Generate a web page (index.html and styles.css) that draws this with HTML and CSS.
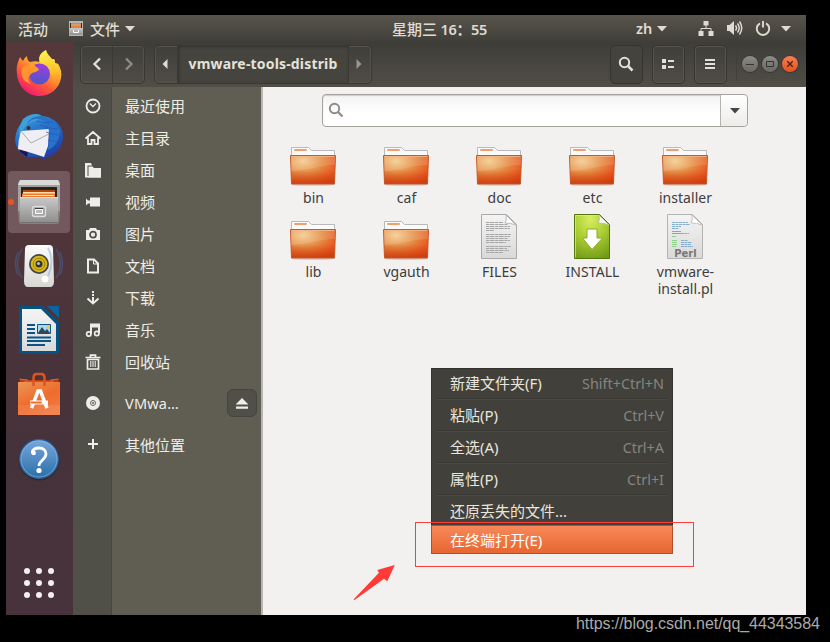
FILE: index.html
```html
<!DOCTYPE html>
<html lang="zh-CN">
<head>
<meta charset="utf-8">
<title>vmware-tools-distrib</title>
<link rel="stylesheet" href="styles.css">
</head>
<body>
<svg class="defs" width="0" height="0" aria-hidden="true">
  <defs>
    <radialGradient id="gFold" cx=".28" cy=".2" r=".95"><stop offset="0" stop-color="#f3cc8e"/><stop offset=".45" stop-color="#e58d45"/><stop offset=".85" stop-color="#e9521d"/><stop offset="1" stop-color="#d94415"/></radialGradient>
    <linearGradient id="gFoldLow" x1="0" y1="0" x2="0" y2="1"><stop offset=".5" stop-color="#cf4a12" stop-opacity="0"/><stop offset="1" stop-color="#c63a0c" stop-opacity=".75"/></linearGradient>
    <linearGradient id="gPage" x1="0" y1="0" x2="0" y2="1"><stop offset="0" stop-color="#f4f4f4"/><stop offset="1" stop-color="#d9d9d9"/></linearGradient>
    <radialGradient id="gGreen" cx=".45" cy=".1" r="1"><stop offset="0" stop-color="#d8ee60"/><stop offset=".5" stop-color="#a8cb30"/><stop offset="1" stop-color="#6d9616"/></radialGradient>
    <linearGradient id="gFox" x1=".85" y1=".05" x2=".25" y2="1"><stop offset="0" stop-color="#fff34e"/><stop offset=".35" stop-color="#ffb32c"/><stop offset=".65" stop-color="#ff5a3a"/><stop offset="1" stop-color="#ef1277"/></linearGradient>
    <linearGradient id="gFlame" x1=".4" y1="0" x2=".5" y2="1"><stop offset="0" stop-color="#fff44f"/><stop offset=".6" stop-color="#ffc02c"/><stop offset="1" stop-color="#ff7a28"/></linearGradient>
    <linearGradient id="gGlobe" x1=".6" y1="0" x2=".4" y2="1"><stop offset="0" stop-color="#a13ae0"/><stop offset="1" stop-color="#4b59c8"/></linearGradient>
    <linearGradient id="gBird" x1=".2" y1="0" x2=".7" y2="1"><stop offset="0" stop-color="#3fa3df"/><stop offset=".45" stop-color="#2268c8"/><stop offset="1" stop-color="#233a9c"/></linearGradient>
    <linearGradient id="gSteel" x1="0" y1="0" x2="0" y2="1"><stop offset="0" stop-color="#c9c9c9"/><stop offset="1" stop-color="#8f8f8f"/></linearGradient>
    <linearGradient id="gSpk" x1="0" y1="0" x2="0" y2="1"><stop offset="0" stop-color="#fbfbfb"/><stop offset="1" stop-color="#d8d7d4"/></linearGradient>
    <linearGradient id="gBag" x1="0" y1="0" x2=".6" y2="1"><stop offset="0" stop-color="#eb9555"/><stop offset=".6" stop-color="#ee6c2c"/><stop offset="1" stop-color="#f07a43"/></linearGradient>
    <linearGradient id="gHelp" x1="0" y1="0" x2="0" y2="1"><stop offset="0" stop-color="#78a6dc"/><stop offset="1" stop-color="#2a6fa8"/></linearGradient>
    <symbol id="folder" viewBox="0 -4 48 48">
      <ellipse cx="24" cy="41.500" rx="22" ry="1.600" fill="#000" opacity=".13"/>
      <path d="M2.500 14V4.500h17l3 3h23V16h-43z" fill="#fafafa" stroke="#b9b9b9"/>
      <rect x="5" y="6" width="13" height="2" rx="1" fill="#f0a070"/>
      <path d="M1.500 12.500h45l-1 28.500H2.500z" fill="url(#gFold)"/>
      <path d="M1.500 12.500h45l-1 28.500H2.500z" fill="url(#gFoldLow)" stroke="#c4592a"/>
      <path d="M2 13h44v9C30 22 18 28 2 28z" fill="#fff" opacity=".12"/>
      <path d="M2.500 13.500h43" stroke="#f5b887" opacity=".8"/>
    </symbol>
    <symbol id="caret" viewBox="0 0 10 6"><path d="M0 0h10L5 5.500z" fill="currentColor"/></symbol>
  </defs>
</svg>

<main class="desktop">
  <header class="topbar">
    <div class="top-left">
      <span class="activities">活动</span>
      <svg class="mini" width="14" height="15" viewBox="0 0 14 15"><path d="M0 0h14v15H0z" fill="#b7b6b3"/><path d="M1 2h12v5H1z" fill="#3c2416"/><path d="M2 2h10v1.500H2zM2 4.500h10V7H2z" fill="#f07c35"/><path d="M2 3.500h10v1H2z" fill="#fff0d0"/><path d="M.5 7h13v7H.5z" fill="url(#gSteel)"/><path d="M4.500 9v2.500h5V9" fill="none" stroke="#fafafa"/></svg>
      <span>文件</span>
      <svg class="caret" width="10" height="6"><use href="#caret"/></svg>
    </div>
    <div class="clock">星期三 <span>16：55</span></div>
    <div class="tray">
      <b class="lang">zh</b>
      <svg class="c1" width="10" height="6"><use href="#caret"/></svg>
      <svg class="net" width="16" height="16" viewBox="0 0 16 16"><path d="M5.500 0h5v4.500h-5zM.5 10h5v5h-5zM10.500 10h5v5h-5z" fill="currentColor"/><path d="M8 4v3.500M3 10V7.500h10V10" fill="none" stroke="currentColor"/></svg>
      <svg class="vol" width="17" height="16" viewBox="0 0 17 16"><path d="M1 4h2.500L8 0v14l-4.500-4H1z" fill="currentColor"/><path d="M9.500 4.500q2 2.500 0 5M11.500 2.500q3.500 4.500 0 9M13.500 .5q4.500 6.500 0 13" fill="none" stroke="currentColor" stroke-width="1.500"/></svg>
      <svg class="pow" width="16" height="16" viewBox="0 0 16 16"><path d="M5 2.300A6.200 6.200 0 1 0 11 2.300M8 0v6.500" fill="none" stroke="currentColor" stroke-width="1.900"/></svg>
      <svg class="c2" width="10" height="6"><use href="#caret"/></svg>
    </div>
  </header>

  <div class="below">
    <nav class="dock">
      <div class="tile"><svg viewBox="8 43 62 62"><path d="M17 74C16 66 18 62 20 57q1 2 3 4 1-3 4-5 0 4 3 6c4-1 7-1 9 0 1-5 3-9 7-12 1 4 4 6 6 9l2 0q1 2 1 4l3 1c3 5 4 9 3 14-2 11-11 18-22 18S18 87 17 74z" fill="url(#gFox)"/><path d="M39 58c1-4 3-6 7-8 0 5 4 6 6 10l2-1q1 2 1 4l3 1c4 6 3 17-4 23 0-11-4-15-9-19-4-3-6-6-6-10z" fill="url(#gFlame)"/><circle cx="39.500" cy="74" r="10.500" fill="url(#gGlobe)"/><path d="M22 68q5-4 10-1l7 2c-1 3-4 3-7 4-4 3-5 7-1 11-8-2-11-9-9-16z" fill="#ff942e"/><path d="M27 66q5-2 6-4 2 5 6 7l-5 2z" fill="#ff9a2c"/></svg></div>
      <div class="tile"><svg viewBox="8 107 62 62"><path d="M36 114q4 0 6 2c12 1 22 10 21 22q-1 10-8 16l-1-2-3 6-2-2-8 5 2-4H26C18 153 14 144 15.500 136 17 127 23 119 31 116z" fill="url(#gBird)"/><path d="M19 147l9 4-1 6-7-5z" fill="#221450"/><path d="M23 119q6-5 13-5l6 2-6 5q-9 1-13 9l-4 6q0-10 4-17z" fill="#3f9fd8"/><circle cx="28.500" cy="128" r="2" fill="#3b3526"/><path d="M21 131l28-2-1 17-4 11q-12-4-26-8 0-9 3-18z" fill="#efeef2"/><path d="M21 131l10 12 18-9" fill="none" stroke="#a3a3ad" stroke-width=".9"/><path d="M27 124q5-6 13-5c9 2 8 11 10 15l-2 16q12-6 12-20-6-11-18-14-12 0-15 8z" fill="#2674ca"/><path d="M36 121q9 3 17 1M40 125q9 4 18 4M46 132q7 3 13 3M48 140q5 2 9 1" stroke="#2856b5" fill="none" opacity=".7"/></svg></div>
      <div class="tile active"><i class="run-dot"></i><svg viewBox="8 171 62 62"><path d="M18 184q1-4 3-4h36q3 0 3 4v27H18z" fill="#a3a2a0"/><path d="M20 180h38l2 5H18z" fill="#dadad9"/><path d="M21 187h36v11H21z" fill="#262421"/><path d="M23 190h32v8H23z" fill="#b5460f"/><path d="M23 192h32v2H23z" fill="#ffd9a8"/><path d="M22 193.500h33v4H22z" fill="#ee792b"/><path d="M23 195.500h31" stroke="#ffe9c4"/><path d="M18 211h42l-1 11q0 2-2 2H21q-2 0-2-2z" fill="#858381"/><path d="M20 197h38v25H20z" fill="url(#gSteel)"/><path d="M20 197.500h38" stroke="#ddd"/><path d="M20 222.500h38" stroke="#717171"/><rect x="32.500" y="206.500" width="13" height="10" rx="2" fill="#a4a4a4" stroke="#dedede" stroke-width="1.300"/><path d="M35.500 209.500h7v4h-7z" fill="#bbb" stroke="#fff"/><path d="M35 208.500h8" stroke="#3b3b3b"/></svg></div>
      <div class="tile"><svg viewBox="8 235 62 62"><path d="M22 249q-9 15 0 29M18 252q-5 12 0 23M56 249q9 15 0 29M60 252q5 12 0 23" fill="none" stroke="#4c4d68" stroke-width="1.500"/><path d="M29 245h20q4 0 4 4l1 32q0 6-4 6H28q-4 0-4-6l1-32q0-4 4-4z" fill="url(#gSpk)"/><path d="M30 246h18" stroke="#fff"/><circle cx="39" cy="264" r="10" fill="#444"/><circle cx="39" cy="264" r="8.300" fill="#d8b717"/><circle cx="39" cy="264" r="5.800" fill="none" stroke="#8e760c" stroke-width=".8"/><circle cx="39" cy="264" r="3.500" fill="#34342f"/><circle cx="38.500" cy="263.500" r="1.600" fill="#bbb"/><circle cx="45" cy="279" r="4" fill="#fff" stroke="#ddd"/><rect x="29.500" y="277.500" width="4" height="4" fill="none" stroke="#ddd"/><path d="M48 248q7 13 0 28" fill="none" stroke="#8eaeda" stroke-width="2" opacity=".5"/></svg></div>
      <div class="tile"><svg viewBox="8 299 62 62"><path d="M21 306h22l16 16v30q0 2-2 2H21q-2 0-2-2v-44q0-2 2-2z" fill="#08527f"/><path d="M47 306h12v12z" fill="#0d62a0"/><path d="M22 309h19l15 15v27H22z" fill="url(#gPage)"/><path d="M27 325h8M27 329h8M27 333h8M27 337.500h24M27 341h24M27 345h18" stroke="#0a5585" stroke-width="1.800"/><path d="M37.500 324.500h13v9h-13z" fill="#a8d8f4" stroke="#0a5585"/><path d="M38 333l4-6 3 4 2-2 3 4z" fill="#334852"/><circle cx="48" cy="327" r="1.500" fill="#f0c440"/></svg></div>
      <div class="tile"><svg viewBox="8 363 62 62"><path d="M20 379l3 1h32l4-1-1 4H20z" fill="#bd3d11"/><path d="M19.500 379l8 1-3 2h29l-3-2 8-1" fill="none" stroke="#e4682d"/><path d="M18 382h42v33H18z" fill="url(#gBag)"/><path d="M18 405h42v10H18z" fill="#fff" opacity=".08"/><path d="M33.500 386v-8q0-4 3-4h5q3 0 3 4v8" fill="none" stroke="#dd5422" stroke-width="2.500"/><path d="M31.500 408l6.500-17h2.500l6.500 17" fill="none" stroke="#fff" stroke-width="3.500"/><path d="M30 402.500h18" stroke="#fff" stroke-width="4" /><path d="M31 402.500h10" stroke="#ee7033" stroke-width="1.800" stroke-linecap="round"/></svg></div>
      <div class="tile"><svg viewBox="8 427 62 62"><circle cx="39" cy="460" r="20.500" fill="#000" opacity=".2"/><circle cx="39" cy="459" r="19.300" fill="url(#gHelp)" stroke="#2763a0" stroke-width="1.200"/><circle cx="39" cy="459" r="18" fill="none" stroke="#92bae8" opacity=".6"/><path d="M32.500 453.500c-1-4 3-5.500 6.500-5.500 5 0 7 3 7 6 0 6-7 6-7 12" fill="none" stroke="#fff" stroke-width="2.800"/><circle cx="33.700" cy="453" r="2.200" fill="#fff"/><circle cx="39" cy="470.500" r="2.600" fill="#fff"/></svg></div>
      <div class="apps"><i></i><i></i><i></i><i></i><i></i><i></i><i></i><i></i><i></i></div>
    </nav>

    <section class="window">
      <header class="headerbar">
        <div class="group nav">
          <button><svg width="10" height="14" viewBox="0 0 10 14"><path d="M8 1.500L2.500 7 8 12.500" fill="none" stroke="#e3e0da" stroke-width="2.300"/></svg></button>
          <button><svg width="10" height="14" viewBox="0 0 10 14"><path d="M2 1.500L7.500 7 2 12.500" fill="none" stroke="#8e8b84" stroke-width="2.300"/></svg></button>
        </div>
        <div class="group path">
          <button class="edge"><svg width="6" height="10" viewBox="0 0 6 10"><path d="M5.500 0v10L.5 5z" fill="#dedbd4"/></svg></button>
          <button class="current">vmware-tools-distrib</button>
          <button class="edge"><svg width="6" height="10" viewBox="0 0 6 10"><path d="M.5 0v10l5-5z" fill="#99968e"/></svg></button>
        </div>
        <div class="tools">
          <button class="on"><svg width="16" height="16" viewBox="0 0 16 16"><circle cx="6.500" cy="6.500" r="4.700" fill="none" stroke="#e3e0da" stroke-width="2"/><path d="M10 10l4.500 4.500" stroke="#e3e0da" stroke-width="2.500"/></svg></button>
          <button><svg width="14" height="12" viewBox="0 0 14 12"><path d="M1 1h4v4H1zM1 7h4v4H1zM7 2h6v2H7zM7 8h6v2H7z" fill="#e3e0da"/></svg></button>
          <button><svg width="12" height="12" viewBox="0 0 12 12"><path d="M1 1h10v2H1zM1 5h10v2H1zM1 9h10v2H1z" fill="#e3e0da"/></svg></button>
        </div>
        <div class="controls">
          <i><svg width="10" height="10" viewBox="0 0 10 10"><path d="M1 5.500h8" stroke="#35342f"/></svg></i>
          <i><svg width="10" height="10" viewBox="0 0 10 10"><path d="M1.500 2.500h7v5h-7z" fill="none" stroke="#35342f"/></svg></i>
          <i class="close"><svg width="10" height="10" viewBox="0 0 10 10"><path d="M2.300 2.300l5.400 5.400M7.700 2.300L2.300 7.700" stroke="#4b1f10" stroke-width="1.300"/></svg></i>
        </div>
      </header>

      <div class="body">
        <ul class="sidebar">
          <li><span class="ic"><svg viewBox="0 0 16 16"><circle cx="8" cy="8" r="6.500" fill="none" stroke="currentColor" stroke-width="1.800"/><path d="M4.800 5.500L8 8.500 11 5.500" fill="none" stroke="currentColor" stroke-width="1.300"/></svg></span><span class="tx">最近使用</span></li>
          <li><span class="ic"><svg viewBox="0 0 16 16"><path d="M.5 8.500L8 2l7.500 6.500M3 7.500V14h3.500v-4h3v4H13V7.500" fill="none" stroke="currentColor" stroke-width="1.800"/></svg></span><span class="tx">主目录</span></li>
          <li><span class="ic"><svg viewBox="0 0 16 16"><path d="M0 1h6l1 2.500H2.500V14H16v1.500H0z" fill="currentColor"/><path d="M3.500 4.500h4L9 6h7v9.500H3.500z" fill="currentColor"/></svg></span><span class="tx">桌面</span></li>
          <li><span class="ic"><svg viewBox="0 0 16 16"><path d="M5 3.500h10v9H5zM1 4.500L4.500 8 1 11.500z" fill="currentColor"/><path d="M3 8h3" stroke="currentColor" stroke-width="3"/></svg></span><span class="tx">视频</span></li>
          <li><span class="ic"><svg viewBox="0 0 16 16"><path d="M1 4h3l1-2h6l1 2h3v10H1z" fill="currentColor"/><circle cx="8" cy="8.700" r="3" fill="none" stroke="#505048" stroke-width="1.700"/></svg></span><span class="tx">图片</span></li>
          <li><span class="ic"><svg viewBox="0 0 16 16"><path d="M3 1.500h6l4 4V14.500H3z" fill="none" stroke="currentColor" stroke-width="2"/><path d="M8.500 1v5H13" fill="none" stroke="currentColor"/></svg></span><span class="tx">文档</span></li>
          <li><span class="ic"><svg viewBox="0 0 16 16"><path d="M7 1h2v2H7zM7 4h2v2H7zM7 7h2v6H7z" fill="currentColor"/><path d="M2.500 8.500L8 13.500l5.500-5" fill="none" stroke="currentColor" stroke-width="2"/></svg></span><span class="tx">下载</span></li>
          <li><span class="ic"><svg viewBox="0 0 16 16"><path d="M6 12V2.500h8V11M6 4.500h8" fill="none" stroke="currentColor" stroke-width="2"/><circle cx="3.800" cy="12" r="2.200" fill="none" stroke="currentColor" stroke-width="1.700"/><circle cx="11.800" cy="11.500" r="2.200" fill="none" stroke="currentColor" stroke-width="1.700"/></svg></span><span class="tx">音乐</span></li>
          <li><span class="ic"><svg viewBox="0 0 16 16"><path d="M.5 3.500h15M5.500 3V1.200h5V3M2.500 5.500V15h11V5.500z" fill="none" stroke="currentColor" stroke-width="1.700"/><path d="M5.800 7v6M8 7v6M10.200 7v6" stroke="currentColor" stroke-width="1.100"/></svg></span><span class="tx">回收站</span></li>
          <li class="disk"><span class="ic"><svg viewBox="0 0 16 16"><circle cx="8" cy="8" r="7" fill="currentColor"/><circle cx="8" cy="8" r="2.500" fill="none" stroke="#66655c"/><circle cx="8" cy="8" r="1" fill="#66655c"/></svg></span><span class="tx">VMwa…</span><button class="eject"><svg width="12" height="11" viewBox="0 0 12 11"><path d="M0 6L6 0l6 6v.5H0zM0 8.500h12v2.300H0z" fill="#f0eee9"/></svg></button></li>
          <li class="other"><span class="ic"><svg viewBox="0 0 16 16"><path d="M3 8h10M8 3v10" stroke="currentColor" stroke-width="2"/></svg></span><span class="tx">其他位置</span></li>
        </ul>

        <div class="content">
          <div class="search"><svg class="lens" width="16" height="16" viewBox="0 0 16 16"><circle cx="6.500" cy="6.500" r="4.700" fill="none" stroke="#8f8b84" stroke-width="1.900"/><path d="M10 10l4.500 4.500" stroke="#8f8b84" stroke-width="2.300"/></svg><span class="drop"><svg width="10" height="6"><use href="#caret"/></svg></span></div>
          <div class="files">
            <figure><svg><use href="#folder"/></svg><figcaption>bin</figcaption></figure>
            <figure><svg><use href="#folder"/></svg><figcaption>caf</figcaption></figure>
            <figure><svg><use href="#folder"/></svg><figcaption>doc</figcaption></figure>
            <figure><svg><use href="#folder"/></svg><figcaption>etc</figcaption></figure>
            <figure><svg><use href="#folder"/></svg><figcaption>installer</figcaption></figure>
            <figure><svg><use href="#folder"/></svg><figcaption>lib</figcaption></figure>
            <figure><svg><use href="#folder"/></svg><figcaption>vgauth</figcaption></figure>
            <figure><svg viewBox="0 0 48 48"><path d="M6.500 1.500h25l10 10v34h-35z" fill="url(#gPage)" stroke="#a9a9a9"/><path d="M31 2q1 6-1 8 6 0 11 2z" fill="#fff" stroke="#b9b9b9"/><path d="M11 9.500h17M11 11.500h22M11 13.500h24M11 15.500h24M11 17.500h8M11 21.500h25M11 23.500h24M11 25.500h22M11 27.500h24M11 29.500h20M11 33.500h25M11 35.500h21M11 37.500h23M11 39.500h17" stroke="#a6a6a6" stroke-dasharray="3 .5 5 .7"/></svg><figcaption>FILES</figcaption></figure>
            <figure><svg viewBox="0 0 48 48"><path d="M6.500 1.500h25l10 10v34h-35z" fill="url(#gGreen)" stroke="#53760d"/><path d="M7.500 2.500h23M7.500 2.500v42" stroke="#dcf08a" opacity=".7" fill="none"/><path d="M31 2q1 6-1 8 6 0 11 2z" fill="#f8f8f8" stroke="#b4c48c"/><path d="M19 16h10v9h5.500L24 36.500 14.500 25H19z" fill="#fff" stroke="#8aae27"/></svg><figcaption>INSTALL</figcaption></figure>
            <figure><svg viewBox="0 0 48 48"><path d="M6.500 1.500h25l10 10v34h-35z" fill="url(#gPage)" stroke="#b4b4b4"/><path d="M31 2q1 6-1 8 6 0 11 2z" fill="#fff" stroke="#c4c4c4"/><path d="M11 9.500h16M11 11.500h18M11 13.500h9M11 15.500h7M20 20.500h8M20 27.500h7M20 29.500h11M20 31.500h10M20 33.500h12" stroke="#87aecb" stroke-dasharray="3 .5"/><path d="M11 18.500h9M11 20.500h9" stroke="#c882c4"/><path d="M11 23.500h4M11 27.500h5M11 29.500h5M11 31.500h5M11 33.500h4" stroke="#8fd08a"/><text x="24.500" y="43.500" text-anchor="middle" class="perl">Perl</text></svg><figcaption>vmware-<br>install.pl</figcaption></figure>
          </div>
        </div>
      </div>
    </section>
  </div>
</main>

<div class="menu">
  <div class="item"><span>新建文件夹(F)</span><kbd>Shift+Ctrl+N</kbd></div><hr>
  <div class="item"><span>粘贴(P)</span><kbd>Ctrl+V</kbd></div><hr>
  <div class="item"><span>全选(A)</span><kbd>Ctrl+A</kbd></div><hr>
  <div class="item"><span>属性(P)</span><kbd>Ctrl+I</kbd></div><hr>
  <div class="item last"><span>还原丢失的文件...</span></div>
  <div class="item hot"><span>在终端打开(E)</span></div>
</div>
<div class="mark"></div>
<svg class="arrow" width="44" height="38" viewBox="352 564 44 38"><path d="M353.500 599.500L379 572.700 377.300 570 394.800 565 387.300 581.300 384 578.700 354.500 600z" fill="#ff3a37"/></svg>
<div class="watermark">https://blog.csdn.net/qq_44343584</div>
</body>
</html>
```
FILE: styles.css
```css
* { box-sizing: border-box; }
body {
  margin: 0;
  width: 830px;
  height: 642px;
  overflow: hidden;
  background: #000;
  font: 15px/20px "Noto Sans", "Noto Sans CJK SC", sans-serif;
  position: relative;
}
svg { display: block; flex: none; }
.defs { position: absolute; }
button { border: 0; padding: 0; margin: 0; background: none; font: inherit; color: inherit; display: flex; align-items: center; justify-content: center; }
.desktop { width: 806px; height: 615px; padding: 15px 0 0 6px; }

/* top panel */
.topbar {
  height: 27px;
  display: grid;
  grid-template-columns: 386px 244px 1fr;
  align-items: center;
  background: linear-gradient(#59554d, #3f3e38);
  color: #dfdbd2;
  font-weight: 500;
  font-family: "Noto Sans CJK SC", sans-serif;
}
.top-left, .tray { display: flex; align-items: center; }
.top-left { padding-left: 12px; }
.top-left span { line-height: 22px; }
.mini { margin: 0 7px 0 21px; }
.caret { margin-left: 5px; }
.clock { white-space: nowrap; }
.clock span { font: 600 14.500px/20px "Noto Sans", "Noto Sans CJK SC", sans-serif; letter-spacing: -.2px; }
.lang { font: 600 14.500px/20px "Noto Sans", sans-serif; width: 21px; padding-bottom: 1px; }
.net { margin-left: 31px; }
.vol { margin-left: 12px; }
.pow { margin-left: 12px; }
.c2 { margin-left: 10px; }

.below { display: flex; height: 573px; }

/* launcher */
.dock {
  width: 67px;
  flex: none;
  display: flex;
  flex-direction: column;
  gap: 2px;
  padding: 1px 2px 17px;
  background: linear-gradient(#56383a, #4f353a 35%, #46323a 70%, #48333c);
}
.tile { height: 62px; width: 62px; position: relative; border-radius: 4px; flex: none; }
.tile svg { width: 62px; height: 62px; }
.tile.active { background: #73595d; }
.run-dot { position: absolute; left: 0; top: 28px; width: 6px; height: 6px; border-radius: 50%; background: #ea5420; }
.apps { margin: auto auto 0; display: grid; grid-template-columns: repeat(3, 6px); gap: 6px; position: relative; left: -.5px; }
.apps i { width: 6px; height: 6px; border-radius: 50%; background: #f2f0ef; }

/* file manager */
.window { flex: 1; display: flex; flex-direction: column; min-width: 0; }
.headerbar {
  height: 45px;
  flex: none;
  display: flex;
  align-items: flex-start;
  padding: 3px 8px 0 7px;
  background: linear-gradient(#3e3d38, #504e46);
}
.group { display: flex; height: 39px; border: 1px solid #383731; border-radius: 5px; box-shadow: inset 0 0 0 1px #55534b; }
.group button, .tools button { padding-bottom: 1px; }
.nav { width: 65px; }
.nav button { width: 31px; }
.nav button + button { border-left: 1px solid #3a3933; width: 32px; }
.path { margin-left: 9px; width: 218px; }
.edge { width: 22px; padding-right: 2px; }
.current { width: 172px; background: #45443e; box-shadow: inset 1px 1px 3px #33322d; color: #e6e2da; font-weight: 700; font-size: 14px; letter-spacing: .17px; border: solid #3a3933; border-width: 0 1px; white-space: nowrap; }
.tools { display: flex; gap: 9px; margin-left: auto; padding-right: 9px; }
.tools button { width: 33px; height: 39px; border: 1px solid #35342f; border-radius: 5px; box-shadow: inset 0 0 0 1px #57554d; padding-right: 1px; }
.tools .on { background: #45433d; box-shadow: none; }
.controls { display: flex; gap: 4px; height: 33px; margin-top: 3px; padding: 8px 0 0 5px; border-left: 1px solid #403f39; }
.controls i { width: 16px; height: 16px; border-radius: 50%; display: flex; align-items: center; justify-content: center; background: linear-gradient(#8c8b85, #686761); box-shadow: 0 0 0 .7px #34332e; }
.controls .close { background: linear-gradient(#f47f55, #e4521f); }

.body { flex: 1; display: flex; min-height: 0; }
.sidebar {
  width: 190px;
  flex: none;
  margin: 0;
  padding: 3px 0 0;
  border-right: 2px solid #b7b5b1;
  list-style: none;
  color: #efede8;
  background: linear-gradient(90deg, #505048 38px, #464640 38px, #464640 39px, #605e52 39px);
}
.sidebar li { display: flex; align-items: center; height: 32px; }
.ic { width: 40px; display: flex; justify-content: center; }
.ic svg { width: 16px; height: 16px; margin-bottom: 1px; }
.tx { margin-left: 12px; line-height: 22px; width: 102px; }
.sidebar .disk { height: 50px; }
.disk .tx { font-size: 14.500px; letter-spacing: .2px; }
.sidebar .other { height: 33px; }
.eject { width: 30px; height: 28px; border: 1px solid #454540; border-radius: 6px; background: #504f48; }

.content { flex: 1; background: #f2f1f0; }
.search { margin: 7px 0 0 59px; width: 426px; height: 33px; display: flex; align-items: center; justify-content: space-between; border: 1px solid #a5a29c; border-radius: 4px; background: linear-gradient(#f3f3f3, #fff 60%); box-shadow: inset 0 1px 1px #ccc; }
.lens { margin: -1px 0 0 5px; }
.drop { width: 27px; height: 31px; border-left: 1px solid #b6b3ae; border-radius: 0 4px 4px 0; display: flex; align-items: center; justify-content: center; background: linear-gradient(#fff, #ececeb); color: #454545; padding-left: 2px; }
.files { display: grid; grid-template-columns: repeat(5, 93px); grid-auto-rows: 74px; margin: 12px 0 0 4px; color: #3d3d3d; }
.files figure { margin: 0; text-align: center; }
.files figure > svg { width: 48px; height: 48px; margin: 0 0 0 22px; }
.files figcaption { font-size: 14px; line-height: 17px; padding-top: 2px; letter-spacing: .05px; }
.perl { font: 700 10px "DejaVu Sans", sans-serif; fill: #777; }

/* context menu */
.menu { position: absolute; left: 431px; top: 368px; width: 242px; height: 186px; background: #41403a; border: 1px solid #33322d; color: #e9e6df; }
.item { height: 28px; display: flex; align-items: center; justify-content: space-between; padding: 0 8px 0 18px; white-space: nowrap; font-size: 15px; }
.item kbd { font: 14.400px/20px "Noto Sans", sans-serif; color: #87857f; padding-top: 1px; }
.menu hr { margin: 1px 4px; border: 0; height: 2px; background: linear-gradient(#393833 50%, #4a4943 50%); }
.item.last { height: 28px; }
.item.hot { height: 29px; margin: 0 -1px; color: #fff; border: 1px solid #b0512c; background: linear-gradient(#f98858, #e66732); }
.mark { position: absolute; left: 415px; top: 522px; width: 279px; height: 45px; border: 1px solid #f93e3c; }
.arrow { position: absolute; left: 352px; top: 564px; }
.watermark { position: absolute; left: 576px; top: 614px; font: 16px/20px "Liberation Sans", sans-serif; letter-spacing: -.05px; color: #aaa; white-space: nowrap; }
```
